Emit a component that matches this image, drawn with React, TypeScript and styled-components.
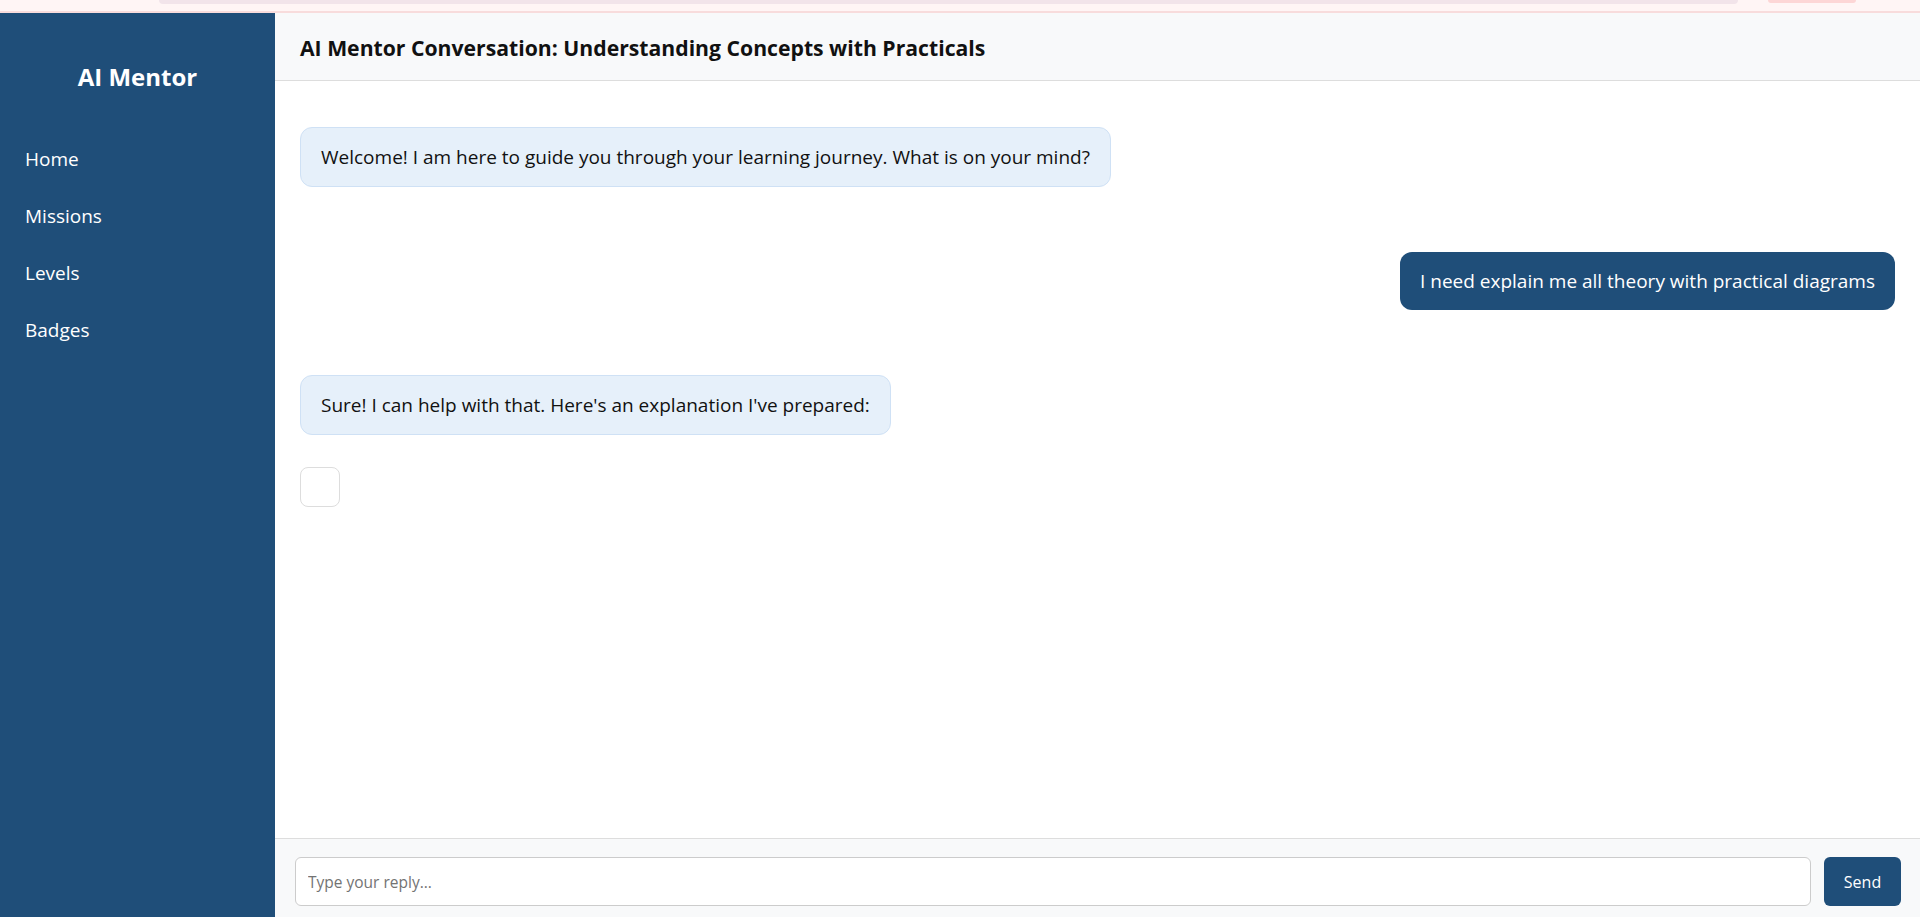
import React from "react";
import styled, { createGlobalStyle } from "styled-components";

const GlobalStyle = createGlobalStyle`
  * { box-sizing: border-box; }
  html, body { margin: 0; padding: 0; overflow: hidden; }
  body {
    font-family: "Open Sans", "Noto Sans", sans-serif;
    background: #ffffff;
    color: #111111;
  }
`;

const Page = styled.div`
  display: flex;
  flex-direction: column;
  width: 1920px;
`;

const TopStrip = styled.div`
  height: 13px;
  background: #fff5f5;
  border-bottom: 2px solid #f8dcdc;
  display: flex;
  align-items: flex-start;
  padding-left: 159px;
  gap: 30px;
`;

const StripPill = styled.div<{ $w: number; $h: number; $color: string }>`
  width: ${(p) => p.$w}px;
  height: ${(p) => p.$h}px;
  background: ${(p) => p.$color};
  border-radius: 0 0 10px 10px;
`;

const Shell = styled.div`
  display: flex;
  height: 911px;
`;

const Sidebar = styled.aside`
  width: 275px;
  flex-shrink: 0;
  background: #1f4e79;
  color: #ffffff;
  display: flex;
  flex-direction: column;
  padding-top: 49px;
`;

const Brand = styled.h2`
  margin: 0 0 40px;
  text-align: center;
  font-size: 24px;
  line-height: 29px;
  font-weight: 700;
`;

const Nav = styled.nav`
  display: flex;
  flex-direction: column;
`;

const NavItem = styled.a`
  display: block;
  padding: 16px 25px;
  font-size: 19px;
  line-height: 25px;
  color: #ffffff;
  text-decoration: none;
`;

const Main = styled.main`
  flex: 1;
  display: flex;
  flex-direction: column;
  min-width: 0;
`;

const Header = styled.header`
  background: #f8f9fa;
  border-bottom: 1px solid #dddddd;
  padding: 21px 25px 19px;
`;

const Title = styled.h1`
  margin: 0;
  font-size: 21.2px;
  line-height: 27px;
  font-weight: 700;
  color: #111111;
`;

const Thread = styled.section`
  flex: 1;
  display: flex;
  flex-direction: column;
  gap: 65px;
  padding: 46px 25px 25px;
  overflow: hidden;
`;

const Group = styled.div<{ $side: "left" | "right" }>`
  display: flex;
  flex-direction: column;
  align-items: ${(p) => (p.$side === "right" ? "flex-end" : "flex-start")};
  gap: 32px;
`;

const Bubble = styled.div<{ $user?: boolean }>`
  max-width: 70%;
  padding: 16px 20px;
  font-size: 19px;
  line-height: 26px;
  border-radius: 12px;
  background: ${(p) => (p.$user ? "#1f4e79" : "#e6f0fa")};
  color: ${(p) => (p.$user ? "#ffffff" : "#111111")};
  border: ${(p) => (p.$user ? "none" : "1px solid #cfe1f5")};
`;

const DiagramSlot = styled.div`
  width: 40px;
  height: 40px;
  border: 1px solid #dddddd;
  border-radius: 8px;
  background: #ffffff;
`;

const Composer = styled.footer`
  display: flex;
  gap: 13px;
  padding: 18px 19px 18px 20px;
  border-top: 1px solid #dddddd;
  background: #f8f9fa;
`;

const ReplyInput = styled.input`
  flex: 1;
  height: 49px;
  padding: 0 12px;
  border: 1px solid #cccccc;
  border-radius: 6px;
  font-family: inherit;
  font-size: 15.5px;
  background: #ffffff;
  outline: none;
  &::placeholder { color: #737373; }
`;

const SendButton = styled.button`
  width: 77px;
  height: 49px;
  border: none;
  border-radius: 6px;
  background: #1f4e79;
  color: #ffffff;
  font-family: inherit;
  font-size: 16px;
  cursor: pointer;
`;

const navItems = ["Home", "Missions", "Levels", "Badges"];

export default function App() {
  return (
    <>
      <GlobalStyle />
      <Page>
        <TopStrip>
          <StripPill $w={1579} $h={4} $color="#f2e4ea" />
          <StripPill $w={88} $h={3} $color="#fdd6d6" />
        </TopStrip>
        <Shell>
          <Sidebar>
            <Brand>AI Mentor</Brand>
            <Nav>
              {navItems.map((n) => (
                <NavItem key={n} href="#">
                  {n}
                </NavItem>
              ))}
            </Nav>
          </Sidebar>
          <Main>
            <Header>
              <Title>AI Mentor Conversation: Understanding Concepts with Practicals</Title>
            </Header>
            <Thread>
              <Group $side="left">
                <Bubble>Welcome! I am here to guide you through your learning journey. What is on your mind?</Bubble>
              </Group>
              <Group $side="right">
                <Bubble $user>I need explain me all theory with practical diagrams</Bubble>
              </Group>
              <Group $side="left">
                <Bubble>Sure! I can help with that. Here's an explanation I've prepared:</Bubble>
                <DiagramSlot />
              </Group>
            </Thread>
            <Composer>
              <ReplyInput placeholder="Type your reply..." />
              <SendButton>Send</SendButton>
            </Composer>
          </Main>
        </Shell>
      </Page>
    </>
  );
}
